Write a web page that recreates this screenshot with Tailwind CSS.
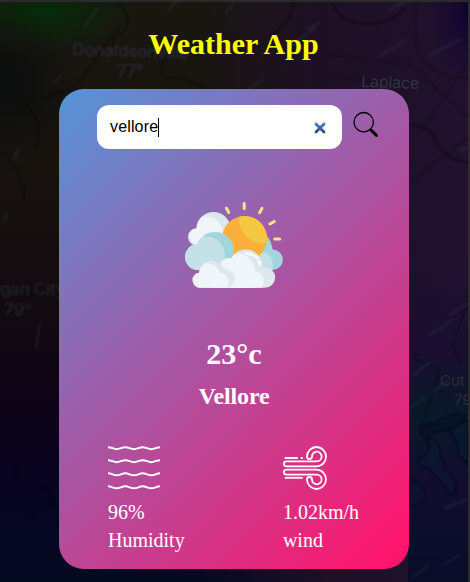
<!DOCTYPE html>
<html lang="en">
<head>
<meta charset="utf-8">
<title>Weather App</title>
<script src="https://cdn.jsdelivr.net/npm/@tailwindcss/browser@4"></script>
</head>
<body class="relative h-[582px] w-[470px] overflow-hidden border-t-2 border-r-2 border-[#2b2b2d] bg-[#0b0614] font-['Liberation_Serif','Times_New_Roman',serif]">
  <!-- Dimmed weather map backdrop -->
  <svg class="absolute inset-0" width="468" height="580" viewBox="0 2 468 580" fill="none" aria-hidden="true">
    <defs>
      <linearGradient id="base" x1="0" y1="0" x2="0" y2="1">
        <stop offset="0" stop-color="#191710"/><stop offset=".3" stop-color="#17120e"/><stop offset=".5" stop-color="#130b10"/>
        <stop offset=".7" stop-color="#0d0316"/><stop offset=".85" stop-color="#070322"/><stop offset="1" stop-color="#030a20"/>
      </linearGradient>
      <linearGradient id="right" x1="0" y1="0" x2="1" y2="0">
        <stop offset=".42" stop-color="#21112c" stop-opacity="0"/><stop offset=".7" stop-color="#1e1025"/><stop offset="1" stop-color="#21112f"/>
      </linearGradient>
      <linearGradient id="low" x1="0" y1="0" x2="0" y2="1">
        <stop offset="0" stop-color="#190e30" stop-opacity="0"/><stop offset=".3" stop-color="#190e30"/><stop offset=".5" stop-color="#071928"/>
        <stop offset=".7" stop-color="#120d30"/><stop offset="1" stop-color="#080d28"/>
      </linearGradient>
      <radialGradient id="green"><stop stop-color="#032d08"/><stop offset="1" stop-color="#0b240b" stop-opacity="0"/></radialGradient>
      <radialGradient id="slate"><stop stop-color="#0a0d0d"/><stop offset="1" stop-color="#0b0e0d" stop-opacity="0"/></radialGradient>
      <radialGradient id="violet"><stop stop-color="#0e0330"/><stop offset="1" stop-color="#140830" stop-opacity="0"/></radialGradient>
      <filter id="fine"><feGaussianBlur stdDeviation=".8"/></filter>
    </defs>
    <path fill="url(#base)" d="M0 0h470v582H0z"/>
    <path fill="url(#right)" d="M0 0h470v582H0z"/>
    <path fill="url(#low)" d="M408 250h62v332h-62z"/>
    <ellipse cx="45" cy="12" rx="95" ry="45" fill="url(#green)"/>
    <ellipse cx="10" cy="85" rx="70" ry="75" fill="url(#slate)"/>
    <ellipse cx="468" cy="15" rx="40" ry="70" fill="url(#violet)"/>
    <g filter="url(#fine)">
      <g stroke="#050505" stroke-opacity=".4" stroke-width="2">
        <path d="M116 0q18 18 8 31q-18 8-5 24M165 57q-10 22 8 21q23 2 35 12M0 152q22 13 24 47M120 25l-45 62-35 13M25 104q20 17 10 45"/>
        <path d="M294 2l-5 16-15 17M410 125q22 0 25 15q8 20 34 22M333 2q4 20 34 22q25 0 38-16" stroke-width="2.500"/>
        <path stroke-width="1.200" d="M260 45l150 20 58 52M322 75l88 10M470 60l-48 70M410 182l58-45M417 2q-10 55 20 70q20 10 33 5M0 450q20 5 16 25q5 25 18 40M40 485q20 12 18 38"/>
      </g>
      <g stroke="#080618" stroke-opacity=".75" stroke-width="1.300" fill="#1a2a37" fill-opacity=".2">
        <path fill="#06121c" d="M420 426q12-2 22-7q13-8 23-3q1 8-12 14q-17-2-26 10q-7-5-7-14z"/>
        <path d="M428 440q13-3 12 18q6 2 3 11q16 8 11 25q-5 2-10-10l-16-16q-8 2-9-10q13 0 9-18zM449 430q12-6 19-9v47q-2-10-10-12 3-12-9-26zM410 478q21 13 13 24l-13 4z"/>
      </g>
      <g stroke="#526273" stroke-opacity=".16" stroke-width="2.600" stroke-linecap="round">
        <path d="M84 27l13-18M168 10l8-8M226 13l7-9M54 83l7-8M15 158l3-9M3 221l4-6M288 47l27-19M382 55l22-14M429 56l32-17M308 29l11-6M390 9l16-8M250 88l12-8M459 151l10-4M430 335l22-14M450 315l18-12M414 375l15-12M432 392l17-12M410 408l15-10M412 578l16-12M443 565l15-9M445 508l22-9M40 323l-4 25"/>
      </g>
      <path d="M413 358l27 11q-10 28-18 55M468 300l-15 45 8 20" stroke="#0b0714" stroke-opacity=".7"/>
    </g>
    <g class="font-['Inter','Liberation_Sans',sans-serif]" font-size="17">
      <g fill="#262831" font-weight="600" filter="url(#fine)">
        <text x="72" y="55" textLength="117" transform="rotate(2 72 55)">Donaldsonville</text>
        <text x="117" y="77" textLength="27">77°</text>
      </g>
      <g fill="#1c2029" font-weight="600" filter="url(#fine)">
        <text x="0" y="295" textLength="66">gan City</text>
        <text x="4" y="316">79°</text>
      </g>
      <text x="361" y="87" textLength="58" font-size="16" fill="#303440" transform="rotate(2 361 87)">Laplace</text>
      <g fill="#292c3b" font-size="15"><text x="440" y="386">Cut</text><text x="454" y="405">79</text></g>
    </g>
  </svg>

  <main class="relative flex flex-col items-center pt-6">
    <h1 class="h-[63px] pr-px text-[30px] leading-9 font-bold text-[#ffff00]">Weather App</h1>
    <section class="flex h-[480px] w-[350px] flex-col items-center rounded-[25px] bg-[linear-gradient(135deg,#5594d8,#ff146b_97%)] pt-4 text-white">
      <div class="flex w-full pl-[38px]">
        <div class="flex h-11 w-[245px] items-center justify-between rounded-xl bg-white pr-[15px] pl-[13px]">
          <div class="flex items-center font-['Liberation_Sans',Arial,sans-serif] text-base text-black"><span class="tracking-[0.15px]">vellore</span><span class="h-[19px] w-px bg-black"></span></div>
          <svg class="mt-[2px]" width="14" height="14" viewBox="0 0 14 14">
            <defs><linearGradient id="cross" x1="0" y1="0" x2="0" y2="14" gradientUnits="userSpaceOnUse"><stop stop-color="#4d86d6"/><stop offset="1" stop-color="#223b70"/></linearGradient></defs>
            <path d="M3 3l8 8M11 3l-8 8" stroke="url(#cross)" stroke-width="2.800" stroke-linecap="round"/>
          </svg>
        </div>
        <svg class="mt-[6px] ml-[10px]" width="30" height="30" viewBox="0 0 30 30" fill="none" stroke="#000">
          <circle cx="11.700" cy="11.200" r="9.700" stroke-width="1.300"/>
          <path d="M18.200 18.300l1.800 1.800" stroke-width="2"/><path d="M19.300 19.400l5.200 5" stroke-width="3" stroke-linecap="round"/>
        </svg>
      </div>

      <svg class="mt-[46px] shrink-0" width="100" height="100" viewBox="184 195 100 100" fill="none">
        <defs>
          <clipPath id="backClip"><circle cx="213.500" cy="229" r="17"/><circle cx="196.500" cy="237" r="8.500"/><path d="M196 230h34v16h-34z"/></clipPath>
          <clipPath id="sunClip"><circle cx="244.500" cy="238.500" r="22.500"/></clipPath>
          <clipPath id="tealClip"><circle cx="215" cy="251" r="19"/><circle cx="198" cy="257" r="13"/><path d="M198 256h36v14h-36z"/></clipPath>
          <clipPath id="frontClip"><circle cx="246" cy="266" r="16.400"/><circle cx="265" cy="277.500" r="10.200"/><circle cx="229" cy="268" r="9.800"/><path d="M219 268h43v8h3v11.700h-46z"/></clipPath>
          <clipPath id="smallClip"><circle cx="212" cy="274" r="13"/><circle cx="200" cy="280.200" r="7.500"/><circle cx="225.500" cy="278.500" r="9.300"/><path d="M200 276h25v11.700h-25z"/></clipPath>
        </defs>
        <path fill="#a3d5dc" d="M240 237l24-4q6 5 8 13l.7 4v20H240z"/><circle cx="272.600" cy="259.700" r="10.200" fill="#a3d5dc"/>
        <path fill="#c3e1e7" d="M272.700 269.800H250V262a11 11 0 0122.700 3z"/>
        <g clip-path="url(#backClip)"><path fill="#dce8ec" d="M184 205h55v50h-55z"/><circle cx="206" cy="233" r="16.500" fill="#eff5f8"/></g>
        <g clip-path="url(#sunClip)"><circle cx="244.500" cy="238.500" r="24" fill="#fbb03b"/><circle cx="264" cy="218.500" r="25" fill="#f5c843"/></g>
        <g clip-path="url(#tealClip)"><path fill="#a3d5dc" d="M184 228h55v45h-55z"/><circle cx="206.500" cy="255" r="18.500" fill="#c3e1e7"/><path fill="#c3e1e7" d="M184 245h14v28h-14z"/></g>
        <g clip-path="url(#frontClip)">
          <path fill="#dce8ec" d="M218 248h60v42h-60z"/>
          <circle cx="237.500" cy="271" r="17.500" fill="#eff5f8"/><circle cx="224" cy="268" r="12" fill="#eff5f8"/>
          <circle cx="253" cy="281.500" r="11" fill="#eff5f8"/><path fill="#eff5f8" d="M218 276h36v12h-36z"/>
        </g>
        <g clip-path="url(#smallClip)"><path fill="#dce8ec" d="M190 258h50v32h-50z"/><circle cx="206.500" cy="277.500" r="14.500" fill="#eff5f8"/><circle cx="219.500" cy="281.800" r="9.500" fill="#eff5f8"/></g>
        <path stroke="#f8fbfc" stroke-width="2.800" stroke-linecap="round" d="M246.500 253.300q6 .5 10.500 4.500M259 261.200l1 2.800"/>
        <path stroke="#fbe583" stroke-width="3" stroke-linecap="round" d="M244.200 203.500v5M226.500 208.200l2.200 4.200M261.900 208.400l-2.200 4.200M274.200 221.500l-4.200 2.500M274.700 239h5"/>
      </svg>

      <h2 class="mt-[41px] text-[30px] leading-9 font-bold">23°c</h2>
      <h3 class="mt-2 text-2xl leading-8 font-bold tracking-[-0.15px]">Vellore</h3>

      <div class="mt-[34px] flex w-full justify-between pr-[50px] pl-[49px] text-[20px] leading-7">
        <div>
          <svg width="52" height="44" viewBox="0 0 52 44" fill="none" stroke="#fff" stroke-width="1.900">
            <path d="M0 1.200C3.500 1.200 5.500 3.200 8.700 3.200S13.900 1.200 17.300 1.200 22.500 3.200 26 3.200 31.200 1.200 34.700 1.200 39.900 3.200 43.300 3.200 48.500 1.200 52 1.200M0 14.200C3.500 14.200 5.500 16.200 8.700 16.200S13.900 14.200 17.300 14.200 22.500 16.200 26 16.200 31.200 14.200 34.700 14.200 39.900 16.200 43.300 16.200 48.500 14.200 52 14.200M0 27.300C3.500 27.300 5.500 29.300 8.700 29.300S13.900 27.300 17.300 27.300 22.500 29.300 26 29.300 31.200 27.300 34.700 27.300 39.900 29.300 43.300 29.300 48.500 27.300 52 27.300M0 40.300C3.500 40.300 5.500 42.300 8.700 42.300S13.900 40.300 17.300 40.300 22.500 42.300 26 42.300 31.200 40.300 34.700 40.300 39.900 42.300 43.300 42.300 48.500 40.300 52 40.300"/>
          </svg>
          <p class="mt-2">96%</p><p>Humidity</p>
        </div>
        <div>
          <svg width="44" height="44" viewBox="0 0 44 44" fill="none" stroke="#fff" stroke-width="1.800">
            <path d="M1.800 12h13M17.800 12h2"/>
            <path d="M43 10.500a9.500 9.500 0 00-19 0 2.500 2.500 0 005 0 4.800 4.800 0 119.600 0 4.800 4.800 0 01-4.800 4.800H3.300a2.500 2.500 0 000 5h30.200a9.500 9.500 0 009.500-9.800z"/>
            <path d="M1.800 31.800h18"/>
            <path d="M43 33.500a9.500 9.500 0 01-19 0 2.500 2.500 0 015 0 4.800 4.800 0 109.600 0 4.800 4.800 0 00-4.800-4.800H3.300a2.500 2.500 0 010-5h30.200a9.500 9.500 0 019.500 9.800z"/>
          </svg>
          <p class="mt-2">1.02km/h</p><p>wind</p>
        </div>
      </div>
    </section>
  </main>
</body>
</html>
